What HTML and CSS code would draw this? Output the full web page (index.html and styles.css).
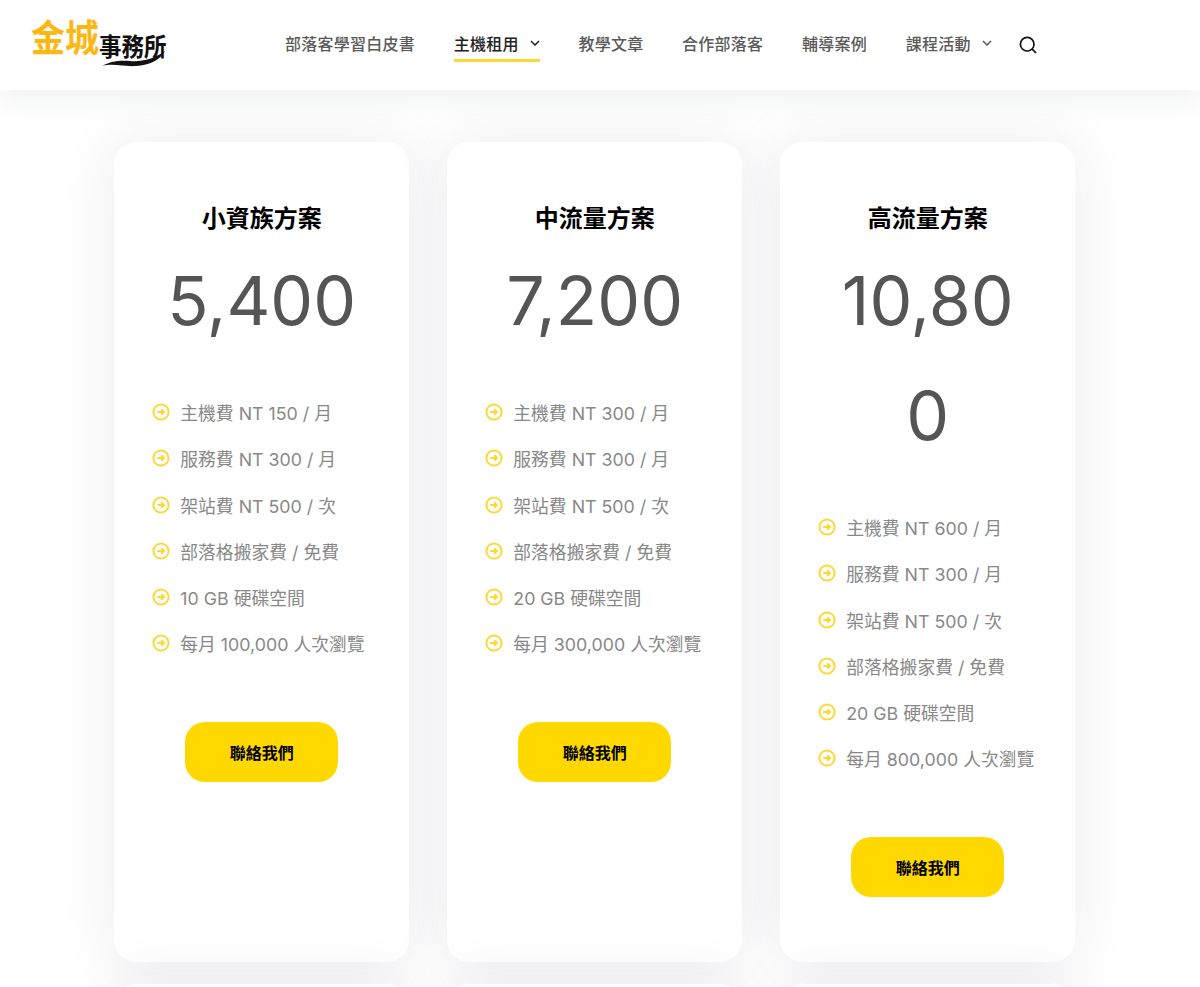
FILE: index.html

```html
<!DOCTYPE html>
<html lang="zh-Hant">
<head>
<meta charset="UTF-8" />
<meta name="viewport" content="width=device-width, initial-scale=1" />
<title>金城事務所 主機租用</title>
<link rel="stylesheet" href="styles.css">
</head>
<body>
  <svg class="icon-defs" aria-hidden="true">
    <symbol id="arrowCircle" viewBox="0 0 18 18">
      <circle cx="9" cy="9" r="7.6" fill="none" stroke="currentColor" stroke-width="2" />
      <path d="M5.2 9h6.800M9.200 6.200 12 9l-2.800 2.800" fill="none" stroke="currentColor" stroke-width="2" />
    </symbol>
    <symbol id="chevron" viewBox="0 0 10 6">
      <path d="M1 1l4 4 4-4" fill="none" stroke="currentColor" stroke-width="1.500" />
    </symbol>
  </svg>

  <header class="site-header">
    <a class="logo" href="#">
      <span class="logo-gold">金城</span>
      <span class="logo-dark">事務所</span>
      <svg class="logo-swoosh" viewBox="0 0 64 16" aria-hidden="true">
        <path d="M0 15C8 10 18 9 28 10 40 11 52 8 63 0 58 9 48 14 34 15 22 16 12 12 0 15z" fill="#111" />
      </svg>
    </a>
    <nav class="main-nav">
      <a href="#">部落客學習白皮書</a>
      <a href="#" class="active">主機租用<svg class="chevron"><use href="#chevron" /></svg></a>
      <a href="#">教學文章</a>
      <a href="#">合作部落客</a>
      <a href="#">輔導案例</a>
      <a href="#">課程活動<svg class="chevron"><use href="#chevron" /></svg></a>
      <button class="search-btn" aria-label="搜尋">
        <svg viewBox="0 0 18 18" width="18" height="18">
          <circle cx="8.200" cy="8.200" r="6.800" fill="none" stroke="#111" stroke-width="1.700" />
          <path d="M13.200 13.200 17 17" fill="none" stroke="#111" stroke-width="1.700" />
        </svg>
      </button>
    </nav>
  </header>

  <main class="plans">
    <section class="plan">
      <h2>小資族方案</h2>
      <div class="price">5,400</div>
      <ul class="features">
        <li><svg class="tick"><use href="#arrowCircle" /></svg>主機費 NT 150 / 月</li>
        <li><svg class="tick"><use href="#arrowCircle" /></svg>服務費 NT 300 / 月</li>
        <li><svg class="tick"><use href="#arrowCircle" /></svg>架站費 NT 500 / 次</li>
        <li><svg class="tick"><use href="#arrowCircle" /></svg>部落格搬家費 / 免費</li>
        <li><svg class="tick"><use href="#arrowCircle" /></svg>10 GB 硬碟空間</li>
        <li><svg class="tick"><use href="#arrowCircle" /></svg>每月 100,000 人次瀏覽</li>
      </ul>
      <a class="contact" href="#">聯絡我們</a>
    </section>

    <section class="plan">
      <h2>中流量方案</h2>
      <div class="price">7,200</div>
      <ul class="features">
        <li><svg class="tick"><use href="#arrowCircle" /></svg>主機費 NT 300 / 月</li>
        <li><svg class="tick"><use href="#arrowCircle" /></svg>服務費 NT 300 / 月</li>
        <li><svg class="tick"><use href="#arrowCircle" /></svg>架站費 NT 500 / 次</li>
        <li><svg class="tick"><use href="#arrowCircle" /></svg>部落格搬家費 / 免費</li>
        <li><svg class="tick"><use href="#arrowCircle" /></svg>20 GB 硬碟空間</li>
        <li><svg class="tick"><use href="#arrowCircle" /></svg>每月 300,000 人次瀏覽</li>
      </ul>
      <a class="contact" href="#">聯絡我們</a>
    </section>

    <section class="plan">
      <h2>高流量方案</h2>
      <div class="price">10,800</div>
      <ul class="features">
        <li><svg class="tick"><use href="#arrowCircle" /></svg>主機費 NT 600 / 月</li>
        <li><svg class="tick"><use href="#arrowCircle" /></svg>服務費 NT 300 / 月</li>
        <li><svg class="tick"><use href="#arrowCircle" /></svg>架站費 NT 500 / 次</li>
        <li><svg class="tick"><use href="#arrowCircle" /></svg>部落格搬家費 / 免費</li>
        <li><svg class="tick"><use href="#arrowCircle" /></svg>20 GB 硬碟空間</li>
        <li><svg class="tick"><use href="#arrowCircle" /></svg>每月 800,000 人次瀏覽</li>
      </ul>
      <a class="contact" href="#">聯絡我們</a>
    </section>

    <section class="plan"></section>
    <section class="plan"></section>
    <section class="plan"></section>
  </main>
</body>
</html>
```

FILE: styles.css

```css
* {
  box-sizing: border-box;
}
html, body {
  height: 987px;
  overflow: hidden;
}
body {
  margin: 0;
  background: #fff;
  color: #555;
  font-family: Inter, "Noto Sans CJK TC", sans-serif;
}
a {
  color: inherit;
  text-decoration: none;
}
.icon-defs {
  display: none;
}

.site-header {
  position: relative;
  z-index: 2;
  display: flex;
  align-items: center;
  height: 90px;
  padding-left: 31px;
  background: #fff;
  box-shadow: 0 8px 30px rgba(30, 40, 70, 0.07);
}
.logo {
  position: relative;
  display: flex;
  align-items: flex-end;
  width: 137px;
  height: 50px;
  font-family: "Noto Sans CJK TC", sans-serif;
  white-space: nowrap;
}
.logo-gold {
  color: #fdb714;
  font-size: 34px;
  line-height: 40px;
  font-weight: 700;
  margin-bottom: 13px;
  transform: scaleY(1.1);
}
.logo-dark {
  color: #111;
  font-size: 22.500px;
  line-height: 26px;
  font-weight: 700;
  margin-bottom: 12px;
  transform: scaleY(1.1);
}
.logo-swoosh {
  position: absolute;
  left: 71px;
  bottom: 3px;
  width: 64px;
  height: 16px;
}

.main-nav {
  display: flex;
  align-items: center;
  gap: 38.700px;
  margin-left: 117px;
  margin-top: -1px;
  font-size: 16px;
  font-weight: 500;
  letter-spacing: 0.250px;
}
.main-nav a {
  display: flex;
  align-items: center;
  height: 34px;
  color: #5a5a5a;
  border-bottom: 3px solid transparent;
}
.main-nav a.active {
  color: #222;
  border-bottom-color: #fdd835;
}
.chevron {
  width: 10px;
  height: 6px;
  margin-left: 11px;
}
.search-btn {
  display: flex;
  margin-left: -11px;
  padding: 0;
  border: 0;
  background: none;
}

.plans {
  display: grid;
  grid-template-columns: repeat(3, 294.800px);
  grid-auto-rows: 820px;
  gap: 22px 38.200px;
  height: 897px;
  overflow: hidden;
  padding: 52px 0 0 114.300px;
}
.plan {
  display: flex;
  flex-direction: column;
  align-items: center;
  padding-top: 60px;
  background: #fff;
  border-radius: 22px;
  box-shadow: 0 0 60px rgba(30, 40, 70, 0.085);
}
.plan h2 {
  margin: 0;
  color: #000;
  font-size: 24px;
  line-height: 34px;
  font-weight: 700;
}
.price {
  width: 100%;
  margin-top: 6.500px;
  padding: 0 50px;
  color: #555;
  font-size: 68px;
  line-height: 115px;
  text-align: center;
  word-break: break-all;
}
.features {
  align-self: stretch;
  margin: 31.500px 0 0;
  padding: 0 0 0 38px;
  list-style: none;
  color: #888;
  font-size: 17.800px;
}
.features li {
  display: flex;
  align-items: center;
  height: 46.250px;
  white-space: nowrap;
}
.tick {
  flex: none;
  width: 18px;
  height: 18px;
  margin-right: 10px;
  color: #fdd835;
}
.contact {
  display: flex;
  align-items: center;
  justify-content: center;
  width: 152.500px;
  height: 60px;
  margin-top: 55.500px;
  background: #ffd800;
  border-radius: 20px;
  color: #000;
  font-size: 16px;
  font-weight: 700;
}
```
